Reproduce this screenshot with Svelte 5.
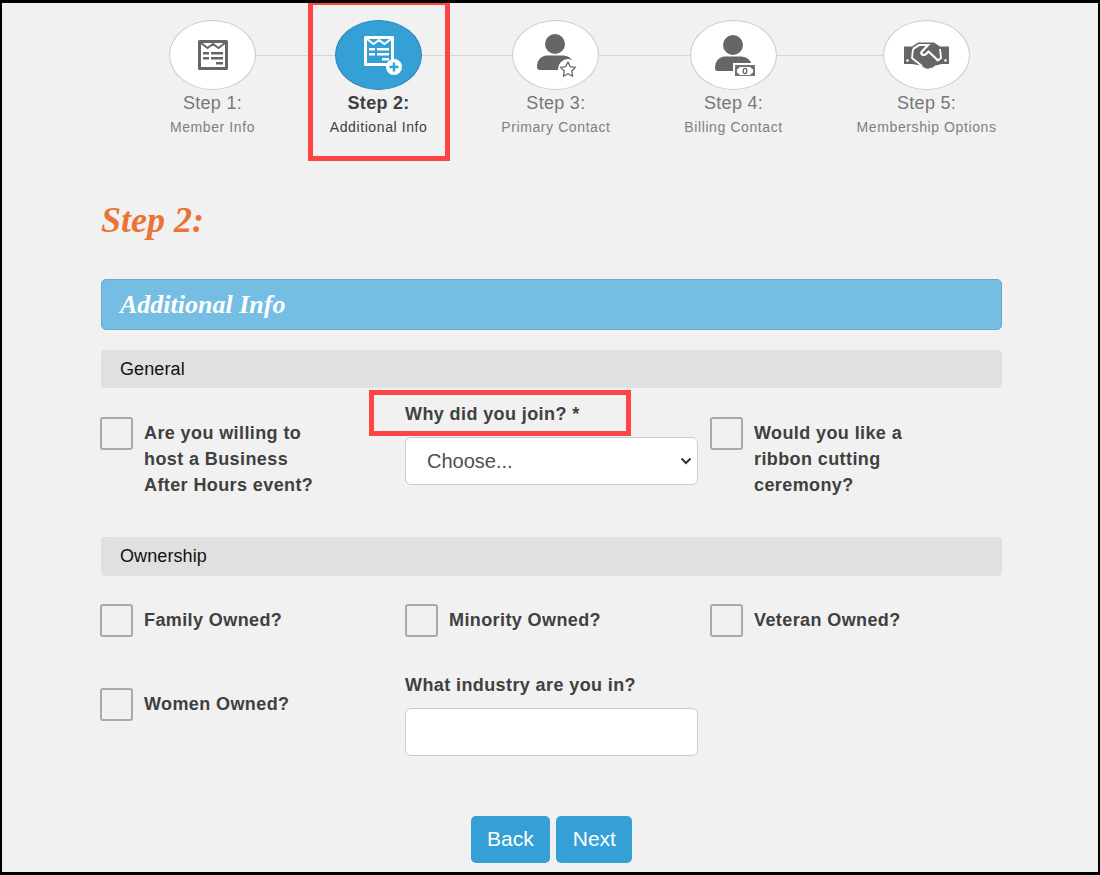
<script lang="ts">
  const steps = [
    { title: "Step 1:", sub: "Member Info", icon: "form" },
    { title: "Step 2:", sub: "Additional Info", icon: "formplus", active: true },
    { title: "Step 3:", sub: "Primary Contact", icon: "star" },
    { title: "Step 4:", sub: "Billing Contact", icon: "cash" },
    { title: "Step 5:", sub: "Membership Options", icon: "shake" }
  ];
</script>

{#snippet formIcon(color)}
  <path d="M1.500 1.500h27v27h-27z" fill="none" stroke={color} stroke-width="3" stroke-linejoin="round" />
  <path d="M3 3l6.500 5 5.500-4 5.500 4L27 3" fill="none" stroke={color} stroke-width="2" />
  <path d="M5 12h6v2.400H5zM13 12h12v2.400H13zM5 17h6v2.400H5zM13 17h12v2.400H13zM18 22h7v2.400h-7z" fill={color} />
{/snippet}

{#snippet person()}
  <circle cx="18" cy="10" r="10" fill="#666" />
  <path d="M0 33c0-7 4-11 10-11.500h15c5 0 9 2 11 6l-8 8.500H2.500C1 36 0 35 0 33z" fill="#666" />
{/snippet}

{#snippet stepIcon(name)}
  {#if name === "form"}
    <svg class="ic" width="30" height="30" viewBox="0 0 30 30">{@render formIcon("#666")}</svg>
  {:else if name === "formplus"}
    <svg class="ic plus" width="38" height="39" viewBox="0 0 38 39">
      {@render formIcon("#fff")}
      <circle cx="30" cy="31" r="8" fill="#fff" />
      <path d="M30 26.500v9M25.500 31h9" stroke="#35a0d5" stroke-width="2.400" />
    </svg>
  {:else if name === "star"}
    <svg class="ic person" width="40" height="43" viewBox="0 0 40 43">
      {@render person()}
      <circle cx="31" cy="35" r="10" fill="#fff" />
      <path d="M31 28l2.300 4.700 5.200.7-3.800 3.600.9 5.200-4.600-2.500-4.600 2.500.9-5.200-3.800-3.600 5.200-.7z" fill="#fff" stroke="#666" stroke-width="1.300" stroke-linejoin="round" />
    </svg>
  {:else if name === "cash"}
    <svg class="ic person" width="40" height="41" viewBox="0 0 40 41">
      {@render person()}
      <rect x="18" y="28" width="22" height="13" fill="#fff" />
      <rect x="21" y="31" width="18" height="10" fill="#fff" stroke="#666" stroke-width="1.800" />
      <path d="M22 32h3l-3 2.500zM38 32h-3l3 2.500zM22 40h3l-3-2.500zM38 40h-3l3-2.500z" fill="#666" />
      <ellipse cx="30" cy="36" rx="1.800" ry="2.600" fill="none" stroke="#666" stroke-width="1.300" />
    </svg>
  {:else}
    <svg class="ic" width="45" height="27" viewBox="0 0 45 27">
      <path d="M0 4.500h8L14 .5h16l6 4h9V22h-8l-3 1-3 .5-2 2-3 .5-2 1-3-1-4-2.500L8 22H0z" fill="#666" />
      <path d="M9 7l6-4h9l-6.500 7c-1 2.500 2.500 4 4.500 2l2.500-2.500L34 18.500" fill="none" stroke="#fff" stroke-width="2.200" />
      <path d="M9 7l-1 9 10 8M36 7l1 9-4 3" fill="none" stroke="#fff" stroke-width="1.800" />
      <circle cx="3.500" cy="18.500" r="1.300" fill="#fff" />
      <circle cx="41.500" cy="18.500" r="1.300" fill="#fff" />
    </svg>
  {/if}
{/snippet}

<div class="page">
  <div class="steps">
    <div class="rail"></div>
    {#each steps as s}
      <div class="step" class:active={s.active}>
        <div class="circle">{@render stepIcon(s.icon)}</div>
        <div class="step-title">{s.title}</div>
        <div class="step-sub">{s.sub}</div>
      </div>
    {/each}
  </div>

  <div class="content">
    <h1>Step 2:</h1>
    <div class="banner">Additional Info</div>

    <div class="section">General</div>
    <div class="row general">
      <label class="check"><span class="box"></span><span>Are you willing to host a Business After Hours event?</span></label>
      <div class="field">
        <div class="field-label">Why did you join? *</div>
        <div class="select">Choose...
          <svg width="12" height="8" viewBox="0 0 12 8"><path d="M1.500 1.500L6 6l4.500-4.500" fill="none" stroke="#333" stroke-width="2" /></svg>
        </div>
      </div>
      <label class="check"><span class="box"></span><span>Would you like a ribbon cutting ceremony?</span></label>
    </div>

    <div class="section">Ownership</div>
    <div class="row owned">
      <label class="check"><span class="box"></span><span>Family Owned?</span></label>
      <label class="check"><span class="box"></span><span>Minority Owned?</span></label>
      <label class="check"><span class="box"></span><span>Veteran Owned?</span></label>
    </div>
    <div class="row last">
      <label class="check women"><span class="box"></span><span>Women Owned?</span></label>
      <div class="field">
        <div class="field-label">What industry are you in?</div>
        <div class="input"></div>
      </div>
    </div>

    <div class="buttons">
      <button>Back</button>
      <button>Next</button>
    </div>
  </div>

  <div class="mark mark-step"></div>
  <div class="mark mark-join"></div>
</div>

<style>
  :global(body) {
    margin: 0;
  }

  .page {
    position: relative;
    box-sizing: border-box;
    width: 1100px;
    height: 875px;
    background: #f1f1f1;
    border: solid #000;
    border-width: 3px 2px;
    font-family: "Liberation Sans", Arial, sans-serif;
    overflow: hidden;
  }

  .steps {
    position: relative;
    display: flex;
    gap: 73.750px;
    padding: 17px 0 0 167px;
  }

  .rail {
    position: absolute;
    left: 210px;
    top: 52px;
    width: 714px;
    height: 1px;
    background: #d6d6d6;
  }

  .step {
    position: relative;
    display: flex;
    flex-direction: column;
    align-items: center;
  }

  .circle {
    display: flex;
    align-items: center;
    justify-content: center;
    box-sizing: border-box;
    width: 87px;
    height: 70px;
    border: 1px solid #ccc;
    border-radius: 50%;
    background: #fff;
  }

  .active .circle {
    background: #35a0d5;
    border-color: #2a86b5;
  }

  .ic {
    display: block;
  }

  .ic.plus {
    margin: 1px 0 0 8px;
  }

  .ic.person {
    margin: 1px 0 0 3px;
  }

  .step-title {
    margin-top: 3px;
    font-size: 18px;
    line-height: 20px;
    color: #777;
    letter-spacing: 0.3px;
  }

  .step-sub {
    margin-top: 4px;
    font-size: 14px;
    line-height: 20px;
    color: #808080;
    letter-spacing: 0.6px;
  }

  .active .step-title {
    font-weight: 700;
    color: #404040;
  }

  .active .step-sub {
    color: #404040;
  }

  .content {
    padding: 0 96px 0 99px;
  }

  h1 {
    margin: 61px 0 0;
    font-family: "Liberation Serif", serif;
    font-style: italic;
    font-weight: 700;
    font-size: 36px;
    line-height: 44px;
    color: #ec7338;
  }

  .banner {
    box-sizing: border-box;
    height: 51px;
    margin-top: 37px;
    padding: 0 18px;
    display: flex;
    align-items: center;
    background: #74bde3;
    border: 1px solid #6aa7c9;
    border-radius: 5px;
    font-family: "Liberation Serif", serif;
    font-style: italic;
    font-weight: 700;
    font-size: 26px;
    color: #fff;
  }

  .section {
    height: 38.400px;
    margin-top: 20px;
    padding: 0 19px;
    display: flex;
    align-items: center;
    background: #e0e0e0;
    border-radius: 4px;
    font-size: 18px;
    letter-spacing: 0.1px;
    color: #111;
  }

  .row {
    display: grid;
    grid-template-columns: 292px 293px 293px;
    column-gap: 12px;
  }

  .general {
    margin-top: 14px;
    height: 135px;
  }

  .general + .section {
    margin-top: 0;
  }

  .owned {
    margin-top: 28px;
  }

  .last {
    margin-top: 36px;
  }

  .field {
    margin-top: -1px;
  }

  .check {
    display: flex;
    align-items: flex-start;
    gap: 11px;
    font-size: 18px;
    font-weight: 700;
    line-height: 26px;
    letter-spacing: 0.4px;
    color: #404040;
    padding-right: 70px;
  }

  .check:first-child .box {
    margin-left: -1px;
  }

  .general .check {
    padding-top: 15px;
  }

  .general .check:last-child {
    padding-right: 90px;
  }

  .check > span:last-child {
    padding-top: 3px;
  }

  .owned .check {
    padding-right: 0;
  }

  .owned .check > span:last-child {
    padding-top: 3.500px;
  }

  .women {
    padding-top: 15px;
    padding-right: 0;
  }

  .box {
    flex: none;
    box-sizing: border-box;
    width: 33px;
    height: 33px;
    border: 2px solid #aaa;
    border-radius: 3px;
    background: #f1f1f1;
  }

  .field-label {
    font-size: 18px;
    font-weight: 700;
    line-height: 26px;
    letter-spacing: 0.4px;
    color: #404040;
  }

  .select,
  .input {
    box-sizing: border-box;
    height: 48px;
    margin-top: 10px;
    background: #fff;
    border: 1px solid #ccc;
    border-radius: 6px;
  }

  .select {
    display: flex;
    align-items: center;
    justify-content: space-between;
    padding: 0 5px 0 21px;
    font-size: 20px;
    color: #495057;
  }

  .buttons {
    display: flex;
    justify-content: center;
    gap: 6px;
    margin-top: 60px;
  }

  button {
    height: 47px;
    padding: 0 16.500px;
    border: 0;
    border-radius: 5px;
    background: #35a0d5;
    color: #fff;
    font-family: inherit;
    font-size: 21px;
  }

  .mark {
    position: absolute;
    box-sizing: border-box;
    border: 5px solid #ff4444;
  }

  .mark-step {
    left: 306px;
    top: -3px;
    width: 142px;
    height: 161px;
  }

  .mark-join {
    left: 367px;
    top: 387px;
    width: 262px;
    height: 46px;
  }
</style>
